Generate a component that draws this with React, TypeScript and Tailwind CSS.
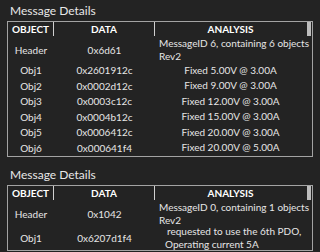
const font = { fontFamily: "Lato, 'Noto Sans', sans-serif" };

type Row = { obj: string; data: string; analysis: string[]; indent?: string[]; extra?: string };

const first: Row[] = [
  { obj: "Header", data: "0x6d61", analysis: ["MessageID 6, containing 6 objects", "Rev2"], indent: ["pl-[4px]", "pl-[4px]"] },
  { obj: "Obj1", data: "0x2601912c", analysis: ["Fixed 5.00V @ 3.00A"] },
  { obj: "Obj2", data: "0x0002d12c", analysis: ["Fixed 9.00V @ 3.00A"] },
  { obj: "Obj3", data: "0x0003c12c", analysis: ["Fixed 12.00V @ 3.00A"] },
  { obj: "Obj4", data: "0x0004b12c", analysis: ["Fixed 15.00V @ 3.00A"] },
  { obj: "Obj5", data: "0x0006412c", analysis: ["Fixed 20.00V @ 3.00A"] },
  { obj: "Obj6", data: "0x000641f4", analysis: ["Fixed 20.00V @ 5.00A"] },
];

const second: Row[] = [
  { obj: "Header", data: "0x1042", analysis: ["MessageID 0, containing 1 objects", "Rev2"], indent: ["pl-[4px]", "pl-[4px]"] },
  {
    obj: "Obj1",
    data: "0x6207d1f4",
    analysis: ["requested to use the 6th PDO,", "Operating current 5A"],
    indent: ["pl-[12px]", "pl-[10px]"],
    extra: "-mt-[2px]",
  },
];

function DetailsTable({ rows, height }: { rows: Row[]; height: string }) {
  return (
    <div className={`relative mx-[7px] border border-[#a3a3a3] ${height} overflow-hidden`}>
      <div className="grid grid-cols-[46px_101px_151px] h-[14px] items-center text-[10px] font-bold text-white leading-none">
        <div className="text-center border-r border-[#d0d0d0] h-full flex items-center justify-center">OBJECT</div>
        <div className="text-center border-r border-[#d0d0d0] h-full flex items-center justify-center">DATA</div>
        <div className="text-center flex items-center justify-center">ANALYSIS</div>
      </div>
      <div className="flex flex-col text-[10px] text-[#e6e6e6] leading-[12px] whitespace-nowrap">
        {rows.map((r) => {
          const multi = r.analysis.length > 1;
          return (
            <div
              key={r.obj}
              className={`grid grid-cols-[46px_101px_151px] items-center ${multi ? "pt-[1px]" : "h-[15.5px]"} ${r.extra ?? ""}`}
            >
              <div className="text-center pt-[1px]">{r.obj}</div>
              <div className="text-center pt-[1px]">{r.data}</div>
              <div className={r.indent ? "leading-[12.5px]" : "text-center"}>
                {r.analysis.map((a, i) => (
                  <div key={a} className={r.indent ? r.indent[i] : ""}>
                    {a}
                  </div>
                ))}
              </div>
            </div>
          );
        })}
      </div>
      <div className="absolute right-[1px] top-0 w-[4px] h-[14px] bg-[#bdbdbd]" />
    </div>
  );
}

export default function App() {
  return (
    <div className="w-[320px] h-[252px] bg-[#232323] overflow-hidden" style={font}>
      <div className="pl-[10px] pt-[3px] text-[12px] leading-[16px] text-[#e8e8e8]">Message Details</div>
      <div className="pt-[2px]">
        <DetailsTable rows={first} height="h-[136px]" />
      </div>
      <div className="pl-[10px] pt-[10px] text-[12px] leading-[16px] text-[#e8e8e8]">Message Details</div>
      <div className="pt-[2px]">
        <DetailsTable rows={second} height="h-[66px]" />
      </div>
    </div>
  );
}
